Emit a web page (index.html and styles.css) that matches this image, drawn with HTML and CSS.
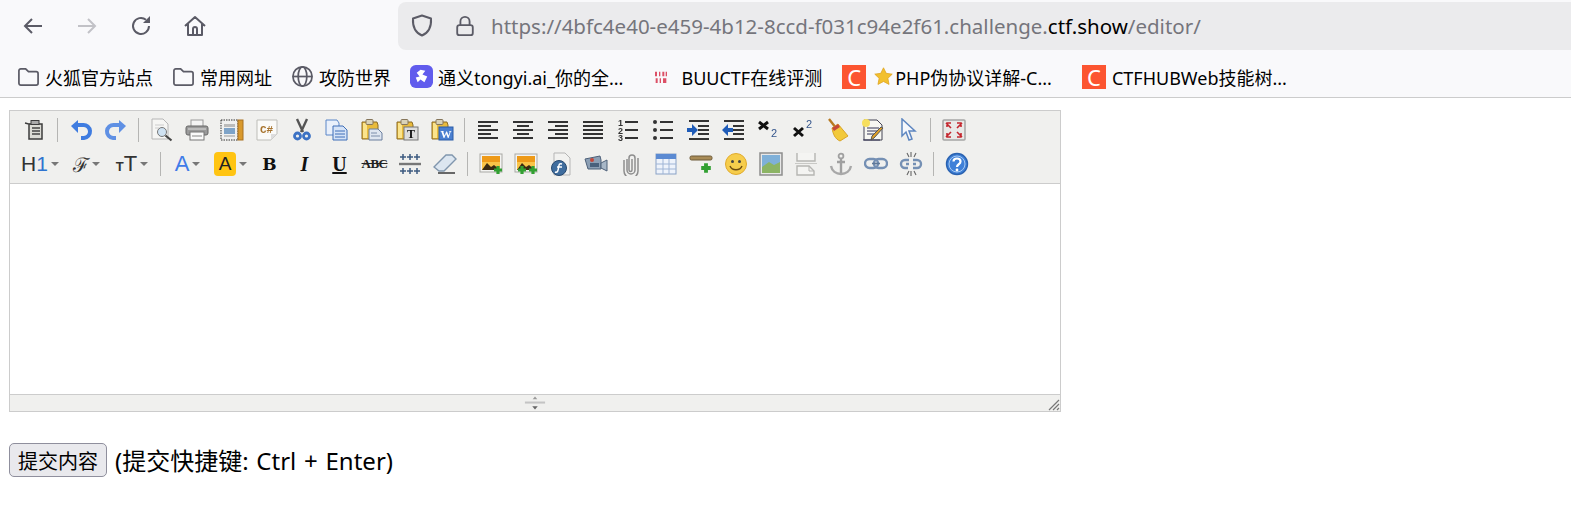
FILE: index.html
```html
<!DOCTYPE html>
<html lang="zh-CN">
<head>
    <meta charset="UTF-8">
    <title>editor</title>
    <link rel="stylesheet" href="styles.css">
</head>
<body>
    <svg class="sprite" aria-hidden="true">
        <symbol id="clip" viewBox="0 0 24 24">
            <path d="M2 4h15l1 3v14H2z" fill="#e9bb3c" stroke="#8a6a24"/>
            <path d="M3 5h4v15H3z" fill="#fbe48c"/>
            <rect x="6" y="1.500" width="7" height="5" rx="1" fill="#d9d2b8" stroke="#86765a"/>
        </symbol>
        <symbol id="pic" viewBox="0 0 24 24">
            <rect x="1" y="2" width="22" height="18" fill="#f4f4f2" stroke="#a9a9a5"/>
            <rect x="3" y="4" width="18" height="6" fill="#ee9a18"/>
            <rect x="3" y="10" width="18" height="8" fill="#f9c448"/>
            <path d="M3 18l5-7 4 4 3-2 6 5z" fill="#3a2a12"/>
        </symbol>
        <symbol id="plus" viewBox="0 0 10 10">
            <path d="M5 1v8M1 5h8" stroke="#32a032" stroke-width="3.2"/>
        </symbol>
    </svg>

    <div class="nav">
        <svg class="nav-ic" viewBox="0 0 24 24"><path d="M21 12H4M11 5l-7 7 7 7" fill="none" stroke="#5b5b66" stroke-width="2"/></svg>
        <svg class="nav-ic" viewBox="0 0 24 24"><path d="M3 12h17M13 5l7 7-7 7" fill="none" stroke="#c2c2c7" stroke-width="2"/></svg>
        <svg class="nav-ic" viewBox="0 0 24 24"><path d="M20 12a8 8 0 1 1-3-6.300" fill="none" stroke="#5b5b66" stroke-width="2"/><path d="M21 2v7h-7z" fill="#5b5b66"/></svg>
        <svg class="nav-ic" viewBox="0 0 24 24"><path d="M2 12l10-9 10 9M5 10v11h14V10M10 21v-6a2 2 0 0 1 4 0v6" fill="none" stroke="#5b5b66" stroke-width="2" stroke-linejoin="round"/></svg>
        <div class="urlbar">
            <svg class="shield" viewBox="0 0 24 24"><path d="M12 2l9 3c.5 8-2 14-9 17C5 19 2.500 13 3 5z" fill="none" stroke="#5b5b66" stroke-width="2" stroke-linejoin="round"/></svg>
            <svg class="lock" viewBox="0 0 24 24"><rect x="3.500" y="11" width="17" height="11" rx="2.500" fill="none" stroke="#5b5b66" stroke-width="2"/><path d="M7 11V7a5 5 0 0 1 10 0v4" fill="none" stroke="#5b5b66" stroke-width="2"/></svg>
            <span class="url">https://4bfc4e40-e459-4b12-8ccd-f031c94e2f61.challenge.<b>ctf.show</b>/editor/</span>
        </div>
    </div>

    <div class="bookmarks">
        <a class="bm"><svg class="bm-ic" viewBox="0 0 24 24"><path d="M2 6a2 2 0 0 1 2-2h5l3 3h8a2 2 0 0 1 2 2v10a2 2 0 0 1-2 2H4a2 2 0 0 1-2-2z" fill="none" stroke="#5b5b66" stroke-width="1.800"/></svg>火狐官方站点</a>
        <a class="bm"><svg class="bm-ic" viewBox="0 0 24 24"><path d="M2 6a2 2 0 0 1 2-2h5l3 3h8a2 2 0 0 1 2 2v10a2 2 0 0 1-2 2H4a2 2 0 0 1-2-2z" fill="none" stroke="#5b5b66" stroke-width="1.800"/></svg>常用网址</a>
        <a class="bm"><svg class="bm-ic" viewBox="0 0 24 24"><circle cx="12" cy="12" r="10" fill="none" stroke="#5b5b66" stroke-width="1.800"/><ellipse cx="12" cy="12" rx="4.500" ry="10" fill="none" stroke="#5b5b66" stroke-width="1.800"/><path d="M2 12h20" stroke="#5b5b66" stroke-width="1.800"/></svg>攻防世界</a>
        <a class="bm bm-tongyi"><svg class="bm-ic" viewBox="0 0 24 24"><rect width="24" height="24" rx="6" fill="#615ced"/><path d="M11 5l5 1-3 4 5 2-3 6-4-3-3 3-2-5 4-1-3-4z" fill="#fff"/></svg>通义tongyi.ai_你的全...</a>
        <a class="bm bm-buu"><svg class="bm-ic bm-small" viewBox="0 0 24 24"><path d="M3 4h3v7H3zM9 4h2v7H9zM14 4h3v7h-3zM19 4h2v7h-2zM4 14h3v7H4zM10 14h2v7h-2zM15 14h5v7h-5z" fill="#dc5066"/></svg>BUUCTF在线评测</a>
        <a class="bm bm-php"><span class="c-logo">C</span><svg class="star" viewBox="0 0 24 24"><path d="M12 1l3.400 7 7.600 1-5.500 5.300L19 22l-7-3.700L5 22l1.500-7.700L1 9l7.600-1z" fill="#f2c02e" stroke="#dfa420"/></svg>PHP伪协议详解-C...</a>
        <a class="bm"><span class="c-logo">C</span>CTFHUBWeb技能树...</a>
    </div>

    <div class="page">
        <div class="editor">
            <div class="toolbar">
                <div class="tb-row">
                    <a class="tb"><svg class="ic" viewBox="0 0 24 24"><path d="M2 5l4 1v15h13V6H6" fill="#dcdcd6" stroke="#3c3c3c" stroke-width="1.500"/><rect x="8" y="2.500" width="8" height="4" fill="#aaa" stroke="#3c3c3c"/><path d="M9 10h8M9 13h8M9 16h8" stroke="#444" stroke-width="1.400"/></svg></a>
                    <i class="sep"></i>
                    <a class="tb"><svg class="ic" viewBox="0 0 24 24"><path d="M7 7h7a5.500 5.500 0 0 1 1 13h-3" fill="none" stroke="#3f7ce0" stroke-width="4"/><path d="M2 8l7-6v13z" fill="#3f7ce0"/></svg></a>
                    <a class="tb"><svg class="ic" viewBox="0 0 24 24"><path d="M17 7h-7a5.500 5.500 0 0 0-1 13h3" fill="none" stroke="#5f90e4" stroke-width="4"/><path d="M22 8l-7-6v13z" fill="#5f90e4"/></svg></a>
                    <i class="sep"></i>
                    <a class="tb"><svg class="ic" viewBox="0 0 24 24"><path d="M2 1h11l5 5v15H2z" fill="#f6f6f4" stroke="#b6b6b6"/><path d="M5 7h9M5 10h4" stroke="#ccc"/><circle cx="12" cy="14" r="4.500" fill="#cfe2f2" stroke="#777"/><path d="M15.500 17.500l6 5" stroke="#444" stroke-width="2.200"/></svg></a>
                    <a class="tb"><svg class="ic" viewBox="0 0 24 24"><rect x="6" y="2" width="12" height="7" fill="#f4f4f4" stroke="#999"/><rect x="1" y="8" width="22" height="9" rx="2" fill="#9a9a9a" stroke="#666"/><rect x="5" y="14" width="14" height="8" fill="#fafafa" stroke="#777"/><path d="M3 11h18" stroke="#ddd"/><path d="M7 18h10" stroke="#888"/></svg></a>
                    <a class="tb"><svg class="ic" viewBox="0 0 24 24"><rect x="1" y="2" width="17" height="20" fill="#f0f0f0" stroke="#333" stroke-dasharray="1.500 1"/><rect x="18" y="2" width="5" height="20" fill="#d9992c" stroke="#a87020"/><rect x="4" y="6" width="11" height="3" fill="#bbb"/><rect x="4" y="10" width="11" height="6" fill="#7ea3c8"/><path d="M4 18h11" stroke="#999"/></svg></a>
                    <a class="tb"><svg class="ic" viewBox="0 0 24 24"><path d="M2 2h20v14l-6 6H2z" fill="#fafaf8" stroke="#bdbdb8"/><path d="M16 22v-6h6z" fill="#ddd"/><text class="ic-code" x="11.500" y="15">C#</text></svg></a>
                    <a class="tb"><svg class="ic" viewBox="0 0 24 24"><path d="M7 1l6 13M17 1l-6 13" stroke="#555" stroke-width="2.400"/><circle cx="7.500" cy="18" r="3" fill="none" stroke="#3c72c4" stroke-width="2.800"/><circle cx="16.500" cy="18" r="3" fill="none" stroke="#3c72c4" stroke-width="2.800"/></svg></a>
                    <a class="tb"><svg class="ic" viewBox="0 0 24 24"><path d="M1 2h11l2 3v12H1z" fill="#e9f0fb" stroke="#5b86c8"/><path d="M8 8h10l4 4v10H8z" fill="#d5e3f7" stroke="#3f6fb8"/><path d="M10 13h10M10 16h10M10 19h10" stroke="#3f6fb8"/></svg></a>
                    <a class="tb"><svg class="ic"><use href="#clip"/><path d="M9 11h9l4 4v7H9z" fill="#dfe6f0" stroke="#6b7f9e"/><path d="M11 15h6M11 18h9" stroke="#7d8eaa"/></svg></a>
                    <a class="tb"><svg class="ic"><use href="#clip"/><rect x="9" y="9" width="14" height="13" fill="#ddd" stroke="#777"/><text class="ic-serif" x="16" y="20">T</text></svg></a>
                    <a class="tb"><svg class="ic"><use href="#clip"/><rect x="9" y="9" width="14" height="13" fill="#4a7fd0" stroke="#2b5ca8"/><text class="ic-word" x="16" y="20">W</text></svg></a>
                    <i class="sep"></i>
                    <a class="tb"><svg class="ic" viewBox="0 0 24 24"><path d="M2 4h20M2 8h13M2 12h20M2 16h13M2 20h20" stroke="#333" stroke-width="2"/></svg></a>
                    <a class="tb"><svg class="ic" viewBox="0 0 24 24"><path d="M2 4h20M6 8h12M2 12h20M6 16h12M2 20h20" stroke="#333" stroke-width="2"/></svg></a>
                    <a class="tb"><svg class="ic" viewBox="0 0 24 24"><path d="M2 4h20M9 8h13M2 12h20M9 16h13M2 20h20" stroke="#333" stroke-width="2"/></svg></a>
                    <a class="tb"><svg class="ic" viewBox="0 0 24 24"><path d="M2 4h20M2 8h20M2 12h20M2 16h20M2 20h20" stroke="#333" stroke-width="2"/></svg></a>
                    <a class="tb"><svg class="ic" viewBox="0 0 24 24"><path d="M9 4h13M9 12h13M9 20h13" stroke="#333" stroke-width="1.800"/><text class="ic-num" x="4.500" y="8">1</text><text class="ic-num" x="4.500" y="15.500">2</text><text class="ic-num" x="4.500" y="23">3</text></svg></a>
                    <a class="tb"><svg class="ic" viewBox="0 0 24 24"><path d="M9 4h13M9 12h13M9 20h13" stroke="#333" stroke-width="1.800"/><circle cx="4" cy="4" r="2" fill="#333"/><circle cx="4" cy="12" r="2" fill="#333"/><circle cx="4" cy="20" r="2" fill="#333"/></svg></a>
                    <a class="tb"><svg class="ic" viewBox="0 0 24 24"><path d="M3 3h20M12 8h11M12 12h11M12 16h11M3 21h20" stroke="#333" stroke-width="2"/><path d="M1 10h5V6l6 6-6 6v-4H1z" fill="#1f5cb8"/></svg></a>
                    <a class="tb"><svg class="ic" viewBox="0 0 24 24"><path d="M3 3h20M12 8h11M12 12h11M12 16h11M3 21h20" stroke="#333" stroke-width="2"/><path d="M12 10H7V6l-6 6 6 6v-4h5z" fill="#1f5cb8"/></svg></a>
                    <a class="tb"><svg class="ic" viewBox="0 0 24 24"><path d="M3 4l9 7M12 4l-9 7" stroke="#111" stroke-width="3"/><text class="ic-idx" x="18" y="19">2</text></svg></a>
                    <a class="tb"><svg class="ic" viewBox="0 0 24 24"><path d="M3 10l9 8M12 10l-9 8" stroke="#111" stroke-width="3"/><text class="ic-idx" x="18" y="10">2</text></svg></a>
                    <a class="tb"><svg class="ic" viewBox="0 0 24 24"><path d="M3 1l7 9" stroke="#b77a22" stroke-width="2.400"/><path d="M6 10l6-4 10 12-8 5C9 21 7 16 6 10z" fill="#f2c93a" stroke="#d8a326"/><path d="M6 10l6-4 2 3-6 4z" fill="#c4493a"/></svg></a>
                    <a class="tb"><svg class="ic" viewBox="0 0 24 24"><path d="M3 2h13l5 5v15H3z" fill="#f7f7f2" stroke="#445"/><path d="M6 10h12M6 13h10M6 16h8M2 22h17" stroke="#335"/><circle cx="5" cy="5" r="4" fill="#f6df5e"/><path d="M22 10l-9 10-3 2 1-4 9-9z" fill="#e0a028" stroke="#555"/></svg></a>
                    <a class="tb"><svg class="ic" viewBox="0 0 24 24"><path d="M6 1v17l4-4 3 8 3-1-3-8h6z" fill="#f6f8fc" stroke="#5e86c0" stroke-width="1.500"/></svg></a>
                    <i class="sep"></i>
                    <a class="tb"><svg class="ic" viewBox="0 0 24 24"><rect x="1" y="2" width="22" height="20" rx="1" fill="#e9e9e7" stroke="#a5a5a5" stroke-width="1.500"/><path d="M4 5l5 5M5 9V5h4M20 5l-5 5M19 9V5h-4M4 19l5-5M5 15v4h4M20 19l-5-5M19 15v4h-4" fill="none" stroke="#c4262e" stroke-width="1.600"/></svg></a>
                </div>
                <div class="tb-row">
                    <a class="tb drop"><span class="h1">H<em>1</em></span><i class="caret"></i></a>
                    <a class="tb drop"><span class="ff">ℱ</span><i class="caret"></i></a>
                    <a class="tb drop"><span class="fs"><small>T</small>T</span><i class="caret"></i></a>
                    <i class="sep"></i>
                    <a class="tb drop2"><span class="fc">A</span><i class="caret"></i></a>
                    <a class="tb drop2"><span class="bc">A</span><i class="caret"></i></a>
                    <a class="tb"><span class="fmt fmt-b">B</span></a>
                    <a class="tb"><span class="fmt fmt-i">I</span></a>
                    <a class="tb"><span class="fmt fmt-u">U</span></a>
                    <a class="tb"><span class="fmt-s">ABC</span></a>
                    <a class="tb"><svg class="ic" viewBox="0 0 24 24"><path d="M1 12h22" stroke="#777" stroke-width="2.400"/><path d="M2 5h6M5 2v6M9 5h6M12 2v6M16 5h6M19 2v6M2 19h6M5 16v6M9 19h6M12 16v6M16 19h6M19 16v6" stroke="#3c5a80" stroke-width="1.500"/></svg></a>
                    <a class="tb"><svg class="ic" viewBox="0 0 24 24"><path d="M1 15L13 3h6l4 4-12 12H6z" fill="#dce6f0" stroke="#8096ad" stroke-width="1.400"/><path d="M5 21h17" stroke="#444" stroke-width="1.600"/></svg></a>
                    <i class="sep"></i>
                    <a class="tb"><svg class="ic"><use href="#pic"/><use href="#plus" x="14" y="13" width="10" height="10"/></svg></a>
                    <a class="tb"><svg class="ic"><use href="#pic"/><use href="#plus" x="3" y="13" width="10" height="10"/><use href="#plus" x="14" y="13" width="10" height="10"/></svg></a>
                    <a class="tb"><svg class="ic" viewBox="0 0 24 24"><path d="M5 1h11l5 5v17H5z" fill="#f2f2f0" stroke="#b5b5b5"/><circle cx="10" cy="16" r="7.500" fill="#3f6d9e" stroke="#26486e"/><path d="M13 12c-3-1-3 1-3.500 4s-1 5-3.500 4M8 15h5" fill="none" stroke="#fff" stroke-width="1.500"/></svg></a>
                    <a class="tb"><svg class="ic" viewBox="0 0 24 24"><path d="M1 7l15-3 1 4v9H4z" fill="#8c9fb4" stroke="#4d6078"/><circle cx="8" cy="8" r="2" fill="#c4493a"/><path d="M17 11l6-3v11l-6-3z" fill="#a7b7c7" stroke="#4d6078"/><rect x="6" y="11" width="9" height="4" fill="#49617c"/></svg></a>
                    <a class="tb"><svg class="ic" viewBox="0 0 24 24"><path d="M8 7v11a4 4 0 0 0 8 0V6a3 3 0 0 0-6 0v12a1 1 0 0 0 3 0V7M5 8v11a7 7 0 0 0 14 0V6" fill="none" stroke="#8e8e8e" stroke-width="1.500"/></svg></a>
                    <a class="tb"><svg class="ic" viewBox="0 0 24 24"><rect x="2" y="2" width="20" height="20" fill="#eef3fb" stroke="#8aa2c6"/><rect x="2" y="2" width="20" height="5" fill="#5b8ad2"/><path d="M2 12h20M2 17h20M9 7v15M15 7v15" stroke="#9fb5d6"/></svg></a>
                    <a class="tb"><svg class="ic" viewBox="0 0 24 24"><rect x="1" y="4" width="22" height="4" rx="1.500" fill="#a88b56" stroke="#6d5a38"/><use href="#plus" x="11" y="10" width="12" height="12"/></svg></a>
                    <a class="tb"><svg class="ic" viewBox="0 0 24 24"><circle cx="12" cy="12" r="10.500" fill="#f6cd4c" stroke="#e0aa2c"/><circle cx="8.500" cy="9.500" r="1.500" fill="#444"/><circle cx="15.500" cy="9.500" r="1.500" fill="#444"/><path d="M6 14c2 5 10 5 12 0" fill="none" stroke="#6d4c10" stroke-width="1.400"/></svg></a>
                    <a class="tb"><svg class="ic" viewBox="0 0 24 24"><rect x="1" y="1" width="22" height="22" fill="#e8e8e8" stroke="#8d8d8d" stroke-width="1.500"/><rect x="3" y="3" width="18" height="18" fill="#7fb0d8"/><path d="M3 15l7-5 5 3 6-3v11H3z" fill="#8cb464"/></svg></a>
                    <a class="tb"><svg class="ic" viewBox="0 0 24 24"><path d="M3 1v8h18V1M3 23v-9h12l5 5v4z" fill="#f4f4f2" stroke="#b5b5b2" stroke-width="1.400"/><path d="M1 11.500h22" stroke="#c8c8c5"/><path d="M15 14v5h5" fill="none" stroke="#b5b5b2"/></svg></a>
                    <a class="tb"><svg class="ic" viewBox="0 0 24 24"><circle cx="12" cy="4" r="2.400" fill="none" stroke="#a0a0a0" stroke-width="1.800"/><path d="M12 6v16M8 10h8" stroke="#a0a0a0" stroke-width="2.400"/><path d="M2 14c1 5 5 8 10 8s9-3 10-8" fill="none" stroke="#a8a8a8" stroke-width="2.400"/></svg></a>
                    <a class="tb"><svg class="ic" viewBox="0 0 24 24"><rect x="1" y="7" width="13" height="9" rx="4.500" fill="none" stroke="#7590b4" stroke-width="2.400"/><rect x="10" y="7" width="13" height="9" rx="4.500" fill="none" stroke="#7590b4" stroke-width="2.400"/><path d="M8 11.500h8" stroke="#5f7898" stroke-width="1.600"/></svg></a>
                    <a class="tb"><svg class="ic" viewBox="0 0 24 24"><path d="M10 8H6a4 4 0 0 0 0 8h3M14 8h4a4 4 0 0 1 0 8h-4M7 12h3M14 12h3" fill="none" stroke="#7590b4" stroke-width="2.400"/><path d="M8 1l2 4M12 0v5M17 1l-2 4M8 23l2-4M12 24v-5M17 23l-2-4" stroke="#666" stroke-width="1.100"/></svg></a>
                    <i class="sep"></i>
                    <a class="tb"><svg class="ic" viewBox="0 0 24 24"><circle cx="12" cy="12" r="10.500" fill="#3f80d8" stroke="#2a62b0" stroke-width="1.400"/><circle cx="12" cy="12" r="8" fill="none" stroke="#a8cbf2"/><path d="M8.500 9.500c0-4 7-4 7 0 0 3-3.500 2.500-3.500 5.500" fill="none" stroke="#fff" stroke-width="2.200"/><circle cx="12" cy="18" r="1.400" fill="#fff"/></svg></a>
                </div>
            </div>
            <div class="edit-area"></div>
            <div class="statusbar">
                <svg class="grip" viewBox="0 0 24 14"><path d="M1 6.500h22" stroke="#c4c4c4" stroke-width="2.200"/><path d="M12 0l2.500 3h-5z" fill="#9a9a9a"/><path d="M12 14l3-3.500H9z" fill="#666"/></svg>
                <svg class="resize" viewBox="0 0 12 12"><path d="M11 1L1 11M11 5l-6 6M11 9l-2 2" stroke="#777" stroke-width="1.200"/></svg>
            </div>
        </div>
        <div class="submit-row">
            <button class="submit">提交内容</button>
            <span class="hint">(提交快捷键: Ctrl + Enter)</span>
        </div>
    </div>
</body>
</html>
```

FILE: styles.css
```css
:root {
    --chrome: #f9f9fb;
    --field: #ebebed;
    --bar: #f0f0ee;
    --line: #cccccc;
    --cjk: "Noto Sans", "Noto Sans CJK SC", sans-serif;
}

* {
    box-sizing: border-box;
}

body {
    margin: 0;
    background: #fff;
    color: #000;
    font-family: var(--cjk);
}

.sprite {
    position: absolute;
    width: 0;
    height: 0;
}

/* browser top */
.nav {
    display: flex;
    align-items: center;
    height: 50px;
    padding: 1px 0 0 21px;
    background: var(--chrome);
}

.nav-ic {
    width: 24px;
    height: 24px;
    margin-right: 30px;
}

.nav-ic:nth-child(4) {
    margin-right: 0;
}

.urlbar {
    display: flex;
    align-items: center;
    flex: 1;
    height: 48px;
    margin-left: 191px;
    padding-left: 12px;
    background: var(--field);
    border-radius: 8px 0 0 8px;
}

.shield {
    width: 24px;
    height: 25px;
    margin-right: 20px;
}

.lock {
    width: 22px;
    height: 24px;
    margin-right: 15px;
}

.url {
    font-size: 20.500px;
    color: #75757c;
    white-space: nowrap;
}

.url b {
    font-weight: 400;
    color: #000;
}

.bookmarks {
    display: flex;
    align-items: center;
    height: 48px;
    padding: 6px 0 0 17px;
    background: var(--chrome);
    border-bottom: 1px solid var(--line);
    font-size: 18px;
    white-space: nowrap;
}

.bm {
    display: flex;
    align-items: center;
    margin-right: 19px;
}

.bm-tongyi {
    margin-right: 30px;
}

.bm-buu {
    margin-right: 20px;
}

.bm-php {
    margin-right: 30px;
}

.bm-ic {
    width: 23px;
    height: 23px;
    margin-right: 5px;
    flex: none;
}

.bm-small {
    width: 16px;
    height: 16px;
    margin: 0 12px 0 0;
}

.c-logo {
    display: flex;
    align-items: center;
    justify-content: center;
    width: 24px;
    height: 24px;
    margin-right: 6px;
    background: #fc5531;
    color: #fff;
    font-size: 22px;
}

.star {
    width: 19px;
    height: 19px;
    margin: 0 2px;
}

/* page */
.page {
    padding: 12px 0 0 9px;
}

.editor {
    position: relative;
    width: 1052px;
    border: 1px solid var(--line);
}

.toolbar {
    height: 73px;
    padding: 2px 0 0 7px;
    background: var(--bar);
    border-bottom: 1px solid var(--line);
}

.tb-row {
    display: flex;
    align-items: center;
    height: 34px;
}

.tb {
    display: flex;
    align-items: center;
    justify-content: center;
    flex: none;
    width: 35px;
    height: 32px;
}

.tb.drop {
    width: 46px;
}

.tb.drop2 {
    width: 43px;
}

.ic {
    width: 24px;
    height: 24px;
    filter: blur(.35px);
}

.ic-code {
    font: bold 11px "Liberation Mono", monospace;
    fill: #a8742e;
    text-anchor: middle;
}

.ic-serif {
    font: bold 12px "Liberation Serif", serif;
    fill: #111;
    text-anchor: middle;
}

.ic-word {
    font: bold 11px "Liberation Serif", serif;
    fill: #fff;
    text-anchor: middle;
}

.ic-num {
    font: bold 9px "Liberation Sans", sans-serif;
    fill: #333;
    text-anchor: middle;
}

.ic-idx {
    font: 11px "Liberation Sans", sans-serif;
    fill: #34558c;
    text-anchor: middle;
}

.sep {
    flex: none;
    width: 1px;
    height: 24px;
    margin: 0 5px;
    background: #b5b5b3;
}

.caret {
    flex: none;
    width: 0;
    height: 0;
    margin-left: 3px;
    border: 4px solid transparent;
    border-top-color: #777;
    border-bottom: 0;
}

.h1 {
    font: 21px "Liberation Sans", sans-serif;
    color: #333;
}

.h1 em {
    font-style: normal;
    color: #2f74d0;
}

.ff {
    font: 20px "DejaVu Serif", serif;
    color: #333;
}

.fs {
    font: 22px "Liberation Sans", sans-serif;
    color: #333;
}

.fs small {
    font-size: 13px;
    font-weight: bold;
}

.fc {
    font: 22px "Liberation Sans", sans-serif;
    color: #3f7ce8;
}

.bc {
    width: 22px;
    height: 24px;
    background: #ffc412;
    border-radius: 4px;
    font: 19px/24px "Liberation Sans", sans-serif;
    text-align: center;
    color: #222;
}

.fmt {
    font: bold 20px "Liberation Serif", serif;
    color: #111;
}

.fmt-b {
    font-family: "DejaVu Serif", serif;
    font-size: 17px;
}

.fmt-i {
    font-style: italic;
}

.fmt-u {
    text-decoration: underline;
}

.fmt-s {
    font: bold 13px "Liberation Serif", serif;
    letter-spacing: -.5px;
    color: #222;
    text-decoration: line-through;
}

.edit-area {
    height: 210px;
    background: #fff;
}

.statusbar {
    display: flex;
    align-items: center;
    justify-content: center;
    height: 17px;
    background: var(--bar);
    border-top: 1px solid var(--line);
}

.grip {
    width: 22px;
    height: 14px;
    filter: blur(.3px);
}

.resize {
    position: absolute;
    right: 0;
    bottom: 0;
    width: 12px;
    height: 12px;
}

.submit-row {
    display: flex;
    align-items: center;
    gap: 8px;
    margin-top: 31px;
}

.submit {
    width: 98px;
    height: 34px;
    padding: 0;
    background: #e9e9ed;
    border: 1px solid #8f8f9d;
    border-radius: 5px;
    font-family: var(--cjk);
    font-size: 20px;
    color: #000;
}

.hint {
    margin-top: -2px;
    font-size: 24px;
    word-spacing: 1.500px;
}
```
